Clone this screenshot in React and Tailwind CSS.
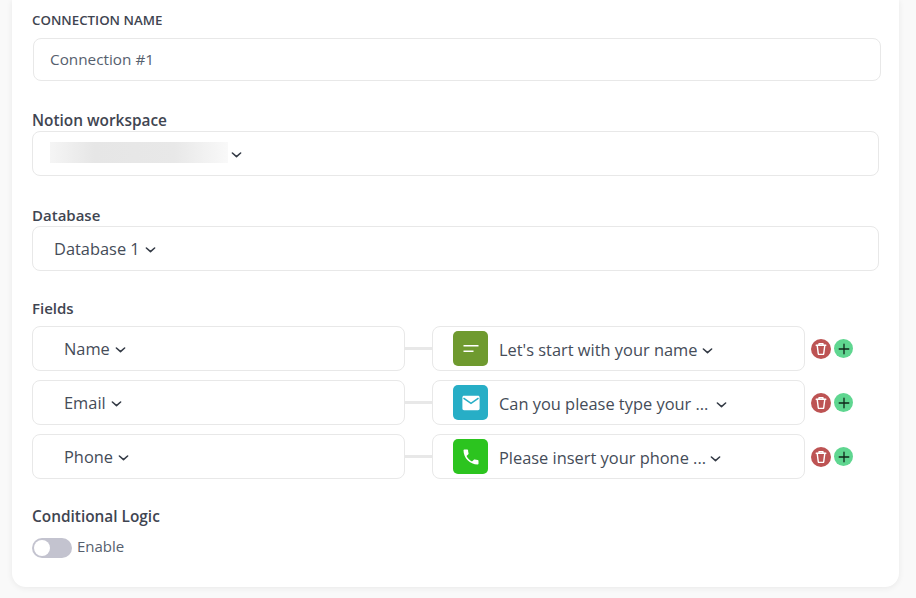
import React from "react";

function Chevron({ className = "" }) {
  return (
    <svg viewBox="0 0 12 8" className={"w-[11px] h-[8px] shrink-0 " + className} fill="none" stroke="#333a45" strokeWidth="1.7" strokeLinecap="round" strokeLinejoin="round">
      <path d="M1.5 1.8 6 5.8l4.5-4" />
    </svg>
  );
}

function Trash() {
  return (
    <span className="w-[20px] h-[20px] rounded-full bg-[#bd5353] flex items-center justify-center">
      <svg viewBox="0 0 14 14" className="w-[14px] h-[14px]" fill="none" stroke="#ffffff" strokeWidth="1.4" strokeLinejoin="round" strokeLinecap="round">
        <path d="M2.2 3.2h9.6" />
        <path d="M5 3V1.8h4V3" />
        <path d="M3.2 3.4l1.1 8.4c.05.4.3.6.7.6h4c.4 0 .65-.2.7-.6l1.1-8.4" />
      </svg>
    </span>
  );
}

function Plus() {
  return (
    <span className="w-[19px] h-[19px] rounded-full bg-[#5fd690] flex items-center justify-center">
      <svg viewBox="0 0 12 12" className="w-[12px] h-[12px]" fill="none" stroke="#10261a" strokeWidth="1.3" strokeLinecap="round">
        <path d="M6 1.2v9.6M1.2 6h9.6" />
      </svg>
    </span>
  );
}

function TextIcon() {
  return (
    <svg viewBox="0 0 16 16" className="w-[16px] h-[16px]" fill="none" stroke="#ffffff" strokeWidth="1.5">
      <path d="M.5 4.8h15M.5 10.200h10" />
    </svg>
  );
}

function MailIcon() {
  return (
    <svg viewBox="0 0 18 16" className="w-[18px] h-[16px]">
      <path fill="#ffffff" d="M2 .8h14c.9 0 1.6.7 1.6 1.6v11.2c0 .9-.7 1.6-1.6 1.6H2c-.9 0-1.6-.7-1.6-1.6V2.4C.4 1.500 1.100.8 2 .8z" />
      <path fill="none" stroke="#27aec6" strokeWidth="1.6" d="M1.500 3.200 9 8.300l7.500-5.100" />
    </svg>
  );
}

function PhoneIcon() {
  return (
    <svg viewBox="0 0 24 24" className="w-[20px] h-[20px]" fill="#ffffff">
      <path d="M6.620 10.790c1.440 2.830 3.760 5.140 6.590 6.590l2.200-2.200c.27-.27.670-.36 1.020-.24 1.120.37 2.330.57 3.570.57.550 0 1 .45 1 1V20c0 .55-.45 1-1 1-9.390 0-17-7.610-17-17 0-.55.45-1 1-1h3.500c.55 0 1 .45 1 1 0 1.250.2 2.450.57 3.570.11.350.03.740-.25 1.020l-2.200 2.200z" />
    </svg>
  );
}

const rows = [
  { name: "Name", q: "Let's start with your name", bg: "bg-[#6f9a2f]", icon: <TextIcon />, gap: "ml-[5px]" },
  { name: "Email", q: "Can you please type your ...", bg: "bg-[#27aec6]", icon: <MailIcon />, gap: "ml-[8px]" },
  { name: "Phone", q: "Please insert your phone ...", bg: "bg-[#2cc41f]", icon: <PhoneIcon />, gap: "ml-[4px]" },
];

const box = "border border-[#e8e8e8] rounded-[8px] bg-white";
const label = "h-[20px] flex items-center font-semibold text-[#3f4551] leading-none";

export default function App() {
  return (
    <div className="w-[916px] h-[598px] overflow-hidden bg-[#f9f9f9] font-['Open_Sans','Noto_Sans',sans-serif] text-[#3f4652]">
      <div className="ml-[12px] w-[887px] h-[587px] bg-white rounded-b-[14px] shadow-[0_1px_6px_rgba(0,0,0,0.07)] pl-[20px] flex flex-col">
        <div className="mt-[12px] h-[18px] flex items-center text-[13.3px] font-semibold text-[#3f4551] leading-none">CONNECTION NAME</div>
        <div className={"mt-[8px] ml-[1px] w-[848px] h-[43px] flex items-center pl-[16px] text-[15.300px] text-[#56606e] " + box}>Connection #1</div>

        <div className={"mt-[30px] text-[15.400px] " + label}>Notion workspace</div>
        <div className={"w-[847px] h-[45px] flex items-center pl-[17px] gap-[3px] " + box}>
          <div className="w-[178px] h-[21px] mb-[2px] bg-[linear-gradient(90deg,#f5f5f5,#e6e6e6_25%,#e8e8e8_70%,#f9f9f9)]" />
          <Chevron className="mt-[3px]" />
        </div>

        <div className={"mt-[30px] pb-[2px] text-[15px] " + label}>Database</div>
        <div className={"w-[847px] h-[45px] flex items-center pl-[21px] pt-[2px] gap-[5px] text-[16.400px] text-[#454c58] " + box}>
          Database 1 <Chevron />
        </div>

        <div className={"mt-[27px] text-[15px] " + label}>Fields</div>
        <div className="mt-[8px] flex flex-col gap-[9px]">
          {rows.map((r) => (
            <div key={r.name} className="flex items-center h-[45px]">
              <div className={"w-[373px] h-[45px] flex items-center pl-[31px] pt-[2px] gap-[5px] text-[16.400px] text-[#454c58] " + box}>
                {r.name} <Chevron />
              </div>
              <div className="w-[27px] h-[3px] bg-[#e8e8e8]" />
              <div className={"w-[373px] h-[45px] flex items-center pl-[20px] text-[16.400px] text-[#454c58] " + box}>
                <div className={"w-[35px] h-[35px] rounded-[5px] flex items-center justify-center " + r.bg}>{r.icon}</div>
                <span className="ml-[11px] mt-[4px] whitespace-nowrap">{r.q}</span>
                <Chevron className={"mt-[4px] " + r.gap} />
              </div>
              <div className="ml-[6px] flex items-center gap-[3px]">
                <Trash />
                <Plus />
              </div>
            </div>
          ))}
        </div>

        <div className={"mt-[27px] pt-[2px] text-[15.400px] " + label}>Conditional Logic</div>
        <div className="mt-[12px] flex items-center gap-[5px] h-[20px] text-[15px] text-[#56606e]">
          <div className="w-[40px] h-[20px] rounded-full bg-[#c3c3cf] flex items-center pl-[2px]">
            <div className="w-[16px] h-[16px] rounded-full bg-white" />
          </div>
          <span className="-mt-[4px]">Enable</span>
        </div>
      </div>
    </div>
  );
}
